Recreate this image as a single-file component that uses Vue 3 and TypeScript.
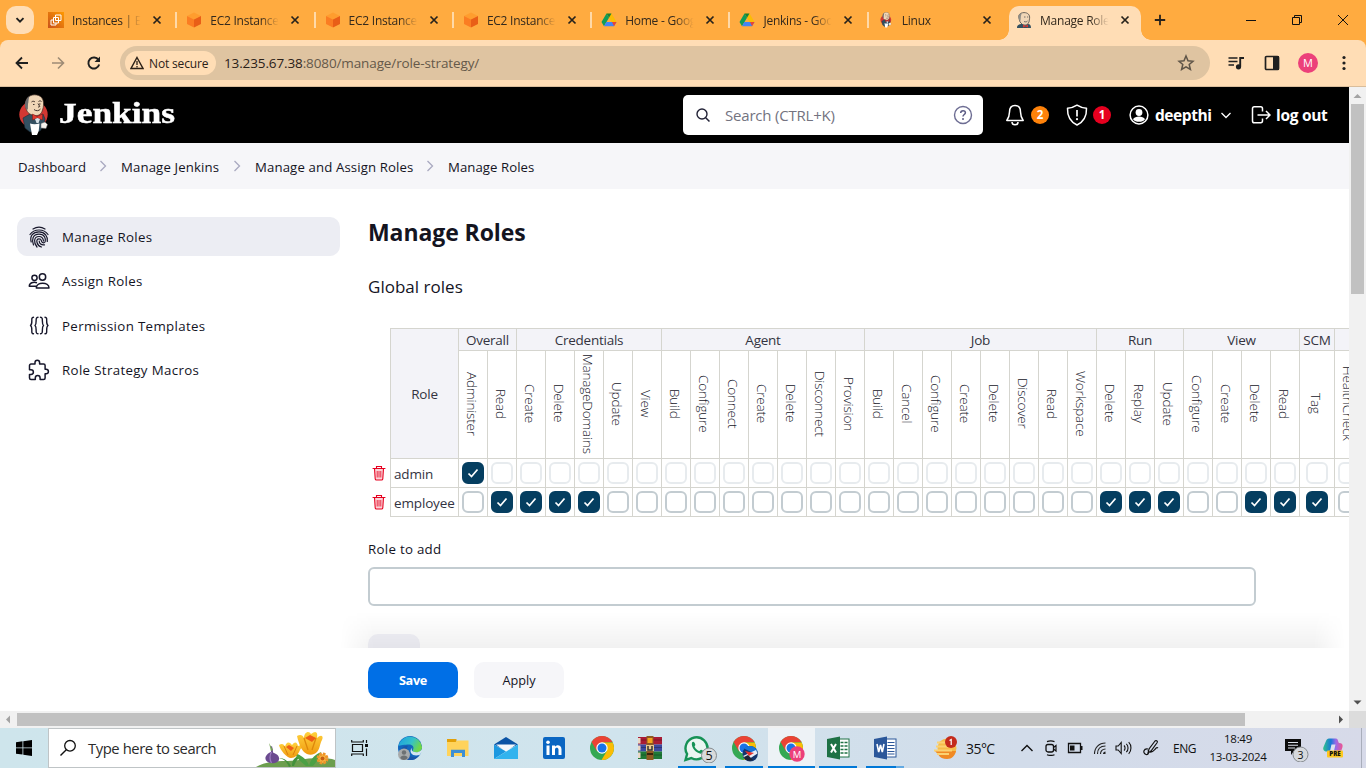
<script setup lang="ts">
interface Tab { title: string; icon: string; active?: boolean }
interface Group { name: string; perms: string[] }

const tabs: Tab[] = [
  { title: 'Instances | EC2', icon: 'i-instances' },
  { title: 'EC2 Instance C', icon: 'i-ec2' },
  { title: 'EC2 Instance C', icon: 'i-ec2' },
  { title: 'EC2 Instance C', icon: 'i-ec2' },
  { title: 'Home - Google', icon: 'i-drive' },
  { title: 'Jenkins - Goog', icon: 'i-drive' },
  { title: 'Linux', icon: 'i-butler' },
  { title: 'Manage Roles', icon: 'i-head', active: true },
]
const crumbs = ['Dashboard', 'Manage Jenkins', 'Manage and Assign Roles', 'Manage Roles']
const menu = [
  { label: 'Manage Roles', icon: 'i-finger', active: true },
  { label: 'Assign Roles', icon: 'i-people' },
  { label: 'Permission Templates', icon: 'i-braces' },
  { label: 'Role Strategy Macros', icon: 'i-puzzle' },
]
const groups: Group[] = [
  { name: 'Overall', perms: ['Administer', 'Read'] },
  { name: 'Credentials', perms: ['Create', 'Delete', 'ManageDomains', 'Update', 'View'] },
  { name: 'Agent', perms: ['Build', 'Configure', 'Connect', 'Create', 'Delete', 'Disconnect', 'Provision'] },
  { name: 'Job', perms: ['Build', 'Cancel', 'Configure', 'Create', 'Delete', 'Discover', 'Read', 'Workspace'] },
  { name: 'Run', perms: ['Delete', 'Replay', 'Update'] },
  { name: 'View', perms: ['Configure', 'Create', 'Delete', 'Read'] },
  { name: 'SCM', perms: ['Tag'] },
  { name: '', perms: ['HealthCheck'] },
]
const perms = groups.flatMap((g) => g.perms)
const roles = [
  { name: 'admin', on: [0], dim: true },
  { name: 'employee', on: [1, 2, 3, 4, 22, 23, 24, 27, 28, 29], dim: false },
]
const apps = [
  { icon: 'i-edge' }, { icon: 'i-folder' }, { icon: 'i-mail' }, { icon: 'i-linkedin' },
  { icon: 'i-chrome' }, { icon: 'i-rar' },
  { icon: 'i-whatsapp', open: true }, { icon: 'i-chrome-a', open: true },
  { icon: 'i-chrome-m', open: true, active: true }, { icon: 'i-excel', open: true },
  { icon: 'i-word', open: true, multi: true },
]
</script>

<template>
  <div class="screen">
    <svg class="defs" width="0" height="0">
      <defs>
        <linearGradient id="g-orange" x1="0" y1="1" x2="1" y2="0"><stop offset="0" stop-color="#c8511b" /><stop offset="1" stop-color="#f90" /></linearGradient>
        <linearGradient id="g-edge" x1="0" y1="0" x2="1" y2=".4"><stop offset="0" stop-color="#1b9de2" /><stop offset=".6" stop-color="#35c1c9" /><stop offset="1" stop-color="#6fd64a" /></linearGradient>
        <linearGradient id="g-pilot" x1="0" y1="0" x2="1" y2="0"><stop offset="0" stop-color="#2fc28a" /><stop offset=".4" stop-color="#1878d8" /><stop offset=".65" stop-color="#9b6be8" /><stop offset="1" stop-color="#f0558f" /></linearGradient>
        <linearGradient id="g-petal" x1="0" y1="0" x2="0" y2="1"><stop offset="0" stop-color="#ffd23d" /><stop offset="1" stop-color="#f09a10" /></linearGradient>
      </defs>
      <symbol id="i-instances" viewBox="0 0 16 16">
        <rect width="16" height="16" fill="url(#g-orange)" />
        <path d="M7.500 3h5.500v5.500H7.500zM5.500 5.500h5V11h-5zM5.500 8H3v5h5v-2" fill="none" stroke="#fff" stroke-width="1" stroke-linejoin="round" />
      </symbol>
      <symbol id="i-ec2" viewBox="0 0 16 16">
        <path d="M8 .5 15 4 8 7.500 1 4z" fill="#ff9d2e" /><path d="M1 4l7 3.500v8L1 12z" fill="#fb7d22" /><path d="M15 4 8 7.500v8L15 12z" fill="#e95e17" />
      </symbol>
      <symbol id="i-drive" viewBox="0 0 16 16">
        <path d="M5.500 1.500h5L15.500 10h-5z" fill="#fbbc04" /><path d="M5.500 1.500 8 5.800 3 14.300.5 10z" fill="#0f9d58" /><path d="M5.300 10h10.200L13 14.300H3z" fill="#4285f4" /><path d="M13 10h2.500L13 14.300 11 10z" fill="#ea4335" /><path d="M5.500 1.500h5L8 5.800z" fill="#188038" />
      </symbol>
      <symbol id="i-head" viewBox="0 0 16 16">
        <path d="M3 6C2 3 4 .7 8 .6c4 0 6 2.400 5.600 5.600L13 10l-2 3H7L4 10z" fill="#f0d6b7" stroke="#4b4a48" stroke-width=".8" />
        <path d="M3 8C1.600 4 3 1.500 6 1.200 4.500 3 5 5 4.500 8.500z" fill="#8f8d86" /><path d="M8 5h1.500m1.500 0h1.200M8 9.500c1.500.8 3 .3 3.500-.5" stroke="#555" fill="none" stroke-width=".8" />
        <path d="M1 16c0-3 2-4 5-4l3 1.500L12 12c2 0 3 1.500 3 4z" fill="#335061" /><path d="M7 12.500 9.500 14 12 12.500v3L9.500 14.500 7 15.500z" fill="#d33833" />
      </symbol>
      <symbol id="i-butler" viewBox="0 0 30 42">
        <ellipse cx="14.500" cy="20.500" rx="14.200" ry="13.500" fill="#d33833" />
        <path d="M4 24l7-4 7 3 6-3 2 5-1 6-4 6-10 1-5-4z" fill="#335061" stroke="#1d2c38" stroke-width=".6" />
        <path d="M7 14C5 6 9 1 15.500.8 22 .8 25 5 24.500 11c0 2-.5 3.500-1 5-1 4-4 6-7 5.500C11 21 8 19 7 14z" fill="#f0d6b7" stroke="#3d2c25" stroke-width=".7" />
        <path d="M7.500 15.500C4.500 12 6 5 10.500 2 9 6 9.800 8 9 10l-.2 5.500z" fill="#6d6b6d" />
        <path d="M12.500 8c1-1 2.500-1 3.500 0m3.500-.5c1-.8 2-.8 3 0M19 9.500l1.800 3-1.800.7M15 15.500c2 1.800 5 1.500 6.500-.5M14 10.500h1.500m4.500-.5h1.500" fill="none" stroke="#30241f" stroke-width=".9" />
        <path d="M13.500 20l4.500 2.500 5.500-2.500v6l-5-2-5 2z" fill="#e1392f" stroke="#7d1714" stroke-width=".5" /><path d="M16 25l2.500-1 2.500 1-1.500 4h-2z" fill="#d8e2e8" />
        <path d="M11 29.500c3 1 6 1 9.500 0l-.8 7.500-1.700 4h-5z" fill="#fff" /><path d="M22 29.500l4-1.500 2.500 2.500-1.500 4-5-.5z" fill="#f7f4ef" stroke="#6d6b6d" stroke-width=".5" />
      </symbol>
      <symbol id="i-finger" viewBox="0 0 22 22">
        <g fill="none" stroke="#17172b" stroke-width="1.200" stroke-linecap="round">
          <path d="M5 3C8.500.8 13.500.8 17 3" /><path d="M2 8.500C6 2.500 16 2.500 20 8.500" /><path d="M3.200 16C1.500 10 5 5.800 11 5.800S20 10.500 19.300 15.500" />
          <path d="M5.500 19C3.500 14 4.500 8.200 11 8.200c5.800 0 6.800 4.300 6.200 7.300-.3 1.800-2.700 1.800-3.400.3-.8-1.800-.3-3-2.800-3-2 0-2.500 1.700-2 3.700.6 2.300 2 3.800 4.500 4.500" /><path d="M9 21C5.500 17 5.500 10.500 11 10.500c3.500 0 4.200 2 4.500 4.500" /><path d="M11.200 15c0 2.500 2 4.300 5.300 3.800" />
        </g>
      </symbol>
      <symbol id="i-people" viewBox="0 0 22 22">
        <g fill="none" stroke="#17172b" stroke-width="1.500" stroke-linejoin="round"><circle cx="14.500" cy="7" r="3.200" /><circle cx="6.500" cy="7.800" r="2.600" /><path d="M8.300 18c0-6.300 12.700-6.300 12.700 0z" /><path d="M8 16.300H1.300c0-3.500 4-4.800 7.700-3.500" /></g>
      </symbol>
      <symbol id="i-braces" viewBox="0 0 22 22">
        <g fill="none" stroke="#17172b" stroke-width="1.400" stroke-linecap="round" stroke-linejoin="round"><path d="M5.500 3.200C2 3.200 5.500 9.500 2.500 11.500c3 2-.5 8.300 3 8.300M10 3.200C6.500 3.200 9.500 9.500 7 11.500c2.500 2-.5 8.300 3 8.300M12.500 3.200c3.500 0 .5 6.300 3 8.300-2.500 2 .5 8.300-3 8.300M17 3.200c3.500 0 0 6.300 3 8.300-3 2 .5 8.300-3 8.300" /></g>
      </symbol>
      <symbol id="i-puzzle" viewBox="0 0 22 22">
        <path d="M7 5V3.500a2.300 2.300 0 0 1 4.600 0V5h4a1.500 1.500 0 0 1 1.500 1.500v3.700h1a2.300 2.300 0 0 1 0 4.600h-1V19a1.500 1.500 0 0 1-1.500 1.500h-3.500V19a2.400 2.400 0 0 0-4.800 0v1.500H3A1.500 1.500 0 0 1 1.500 19v-3.500H3a2.400 2.400 0 0 0 0-4.800H1.500V6.500A1.500 1.500 0 0 1 3 5z" fill="none" stroke="#17172b" stroke-width="1.500" stroke-linejoin="round" />
      </symbol>
      <symbol id="i-trash" viewBox="0 0 14 16">
        <path d="M2.500 3.500l.7 10.300c.1.700.5 1.200 1.200 1.200h5.200c.7 0 1.100-.5 1.200-1.200l.7-10.300" fill="#fbd3d8" stroke="#e6001f" stroke-width="1.100" />
        <path d="M1 3.500h12M4.500 3V1.500h5V3" fill="none" stroke="#e6001f" stroke-width="1.100" stroke-linecap="round" /><path d="M5.200 6v6.500M7 6v6.500M8.800 6v6.500" fill="none" stroke="#e6001f" stroke-width=".8" />
      </symbol>
      <symbol id="i-chrome" viewBox="0 0 24 24">
        <circle cx="12" cy="12" r="12" fill="#34a853" /><path d="M1.600 6A12 12 0 0 1 22.400 6L12 6.600 6.800 15z" fill="#ea4335" /><path d="M12 6.600h10.700A12 12 0 0 1 11.500 24l5.400-9z" fill="#fbbc04" />
        <circle cx="12" cy="12" r="5.700" fill="#fff" /><circle cx="12" cy="12" r="4.500" fill="#1a73e8" />
      </symbol>
      <symbol id="i-chrome-a" viewBox="0 0 26 26">
        <use href="#i-chrome" width="24" height="24" /><circle cx="18.200" cy="17.700" r="7.700" fill="#14366f" /><path d="M12 12.500c4-4 11-3 13.500 3l-4 1.500z" fill="#1574db" /><path d="M11 20l13-6 1.500 3.500-10 6.500z" fill="#e8eef8" /><path d="M13 15l9 2-5 3z" fill="#e5322d" /><path d="M12 21l4-2 5 5c-4 2-8 0-9-3z" fill="#1d2536" />
      </symbol>
      <symbol id="i-chrome-m" viewBox="0 0 26 26">
        <use href="#i-chrome" width="24" height="24" /><circle cx="18" cy="18" r="7.700" fill="#ec407a" /><text x="18" y="21.500" font-size="9.500" fill="#fff" text-anchor="middle">M</text>
      </symbol>
      <symbol id="i-edge" viewBox="0 0 24 24">
        <circle cx="12" cy="12" r="12" fill="#1266bd" /><path d="M.4 10A12 12 0 0 1 24 11c0 4-3 5.500-6 5.500-2.500 0-4-1.200-3-2.700 1.500-2.800-.5-5.300-4-5.300-4.500 0-9 1-10.600 1.500z" fill="url(#g-edge)" />
        <path d="M14.500 11.500c-1.500 1.500-1 3.500 1 4.300 2.500 1 5.500.4 7.500-1.300l1-1.500v3l-2.500 3c-3.500 1-7 .5-8.500-2-1-2-.5-4 1.500-5.500z" fill="#d3e6f0" />
        <path d="M10 10c-2.500 3-1.500 8.500 3 10.500 3 1.300 6.500.5 8.500-1.500C18.500 24 12 25.500 7 23L4 12c2-2 4-2.500 6-2z" fill="#1a56a8" />
        <circle cx="6" cy="18.500" r="6" fill="#a7aaab" /><circle cx="6" cy="16.500" r="2.200" fill="#6d7173" /><path d="M2.300 22c0-3.500 7.400-3.500 7.400 0-2 2.500-5.500 2.500-7.400 0z" fill="#6d7173" />
      </symbol>
      <symbol id="i-folder" viewBox="0 0 24 24">
        <path d="M1 3h9.500v4H1z" fill="#e2a009" /><path d="M1 6h8.500l2-1.500H22.500V20H1z" fill="#ffd35b" /><path d="M5 21v-7.300h14V21h-3v-4H8v4z" fill="#3d8fd4" />
      </symbol>
      <symbol id="i-mail" viewBox="0 0 24 24">
        <path d="M0 8.500 12 1l12 7.500-12 6z" fill="#0a53a5" /><path d="M2 8.500h20L12 16z" fill="#f4f8fb" /><path d="M0 8.500l12 7L0 23z" fill="#1c98e0" /><path d="M24 8.500 0 23h24z" fill="#32b3ee" />
      </symbol>
      <symbol id="i-linkedin" viewBox="0 0 24 24">
        <rect x="1" y="1" width="22" height="22" rx="2" fill="#0a66c2" /><path d="M4.500 9.500h3v9.500h-3zM10 9.500h3v1.300c1.600-2.500 6.500-2 6.500 2.500V19h-3v-5.200c0-2.600-3.500-2.600-3.500 0V19h-3z" fill="#fff" /><circle cx="6" cy="6.300" r="1.800" fill="#fff" />
      </symbol>
      <symbol id="i-rar" viewBox="0 0 24 24">
        <rect x="0" y="1" width="24" height="7.500" fill="#a91c35" /><rect x="0" y="8.500" width="24" height="7" fill="#3d489f" /><rect x="0" y="15.500" width="24" height="7.500" fill="#1f7a37" />
        <path d="M0 2h2.500v5.500H0zM0 9.500h2.500v5H0zM0 16.500h2.500V22H0z" fill="#ead8c6" /><path d="M3 4h21M3 11.500h21M3 19h21" stroke="#00000040" />
        <path d="M8.500 0h7v24h-7z" fill="#8e5a22" /><path d="M9.500 2h5v5h-5z" fill="#f6a31e" /><path d="M8 9h8v6H8z" fill="#e9c98f" /><path d="M10 10v4h4v-4" fill="none" stroke="#333" stroke-width="1.500" /><path d="M9 18h6" stroke="#3a230b" stroke-width="2" />
      </symbol>
      <symbol id="i-whatsapp" viewBox="0 0 34 28">
        <path d="M2.500 25l1.600-6A11 11 0 1 1 8.300 23z" fill="#eaf5f1" stroke="#169256" stroke-width="2.400" /><path d="M9 7.500c1.500-1.500 2.500-.3 3.300 2 .4 1-1.200 1.500-.6 2.500 1 1.800 2.300 3 4.300 3.900 1 .4 1.400-1.400 2.200-1.100 2.600 1 3 1.500 1.800 3-3.500 3.500-12.700-4.500-11-10.300z" fill="#169256" />
        <circle cx="26" cy="20.500" r="7.500" fill="#d8dadb" stroke="#858b8f" /><text x="26" y="25" font-size="12.500" fill="#111" text-anchor="middle">5</text>
      </symbol>
      <symbol id="i-excel" viewBox="0 0 24 24">
        <rect x="12" y="3" width="10" height="18" fill="#fff" stroke="#217346" /><path d="M13.500 6.500h8M13.500 10h8M13.500 13.500h8M13.500 17h8" stroke="#217346" stroke-width="1.600" stroke-dasharray="3 1" /><path d="M0 3l13-2.500v23L0 21z" fill="#1e7145" /><path d="M4 8l5 8.500M9 8l-5 8.500" stroke="#fff" stroke-width="2" />
      </symbol>
      <symbol id="i-word" viewBox="0 0 24 24">
        <rect x="12" y="3" width="10" height="18" fill="#fff" stroke="#2b579a" /><path d="M13.500 6.500h7M13.500 9.500h7M13.500 12.500h7M13.500 15.500h7M13.500 18h7" stroke="#2b579a" stroke-width="1.200" /><path d="M0 3l13-2.500v23L0 21z" fill="#2b579a" /><path d="M3 8l1.700 8L6.500 9l1.800 7L10 8" fill="none" stroke="#fff" stroke-width="1.600" />
      </symbol>
    </svg>

    <header class="tabstrip">
      <button class="tabsearch"><svg width="10" height="10" viewBox="0 0 10 10"><path d="M1.500 3.200 5 6.700l3.500-3.500" fill="none" stroke="#1f1f1f" stroke-width="1.900" /></svg></button>
      <div class="tabs">
        <div v-for="(t, i) in tabs" :key="i" class="tab" :class="{ active: t.active, sep: i < 6 }">
          <svg class="fav" width="16" height="16"><use :href="'#' + t.icon" /></svg>
          <span class="title">{{ t.title }}</span>
          <svg class="x" width="10" height="10" viewBox="0 0 10 10"><path d="M1.500 1.500l7 7M8.500 1.500l-7 7" stroke="#27221b" stroke-width="1.700" /></svg>
        </div>
      </div>
      <svg class="plus" width="12" height="12" viewBox="0 0 12 12"><path d="M6 .8v10.400M.8 6h10.400" stroke="#27221b" stroke-width="1.800" /></svg>
      <div class="winctl">
        <svg width="12" height="12" viewBox="0 0 12 12"><path d="M1 6.500h10" stroke="#111" /></svg>
        <svg width="12" height="12" viewBox="0 0 12 12"><path d="M1.500 3.500h7v7h-7zM3.500 3.500v-2h7v7h-2" fill="none" stroke="#111" /></svg>
        <svg width="12" height="12" viewBox="0 0 12 12"><path d="M1 1l10 10M11 1 1 11" stroke="#111" /></svg>
      </div>
    </header>

    <div class="toolwrap">
      <div class="toolbar">
        <svg class="nav" width="16" height="16" viewBox="0 0 16 16"><path d="M14 8H3M8 2.500 2.500 8 8 13.500" fill="none" stroke="#1f1f1f" stroke-width="1.800" /></svg>
        <svg class="nav" width="16" height="16" viewBox="0 0 16 16"><path d="M2 8h11M8 2.500 13.500 8 8 13.500" fill="none" stroke="#9e8b75" stroke-width="1.600" /></svg>
        <svg class="nav" width="16" height="16" viewBox="0 0 16 16"><path d="M13.200 9.500A5.500 5.500 0 1 1 12.500 5" fill="none" stroke="#1f1f1f" stroke-width="1.900" /><path d="M14 1.500V7H8.500z" fill="#1f1f1f" /></svg>
        <div class="omni">
          <div class="chip"><svg width="14" height="14" viewBox="0 0 14 14"><path d="M7 1.500 13 12.500H1z" fill="none" stroke="#2b2118" stroke-width="1.400" /><path d="M7 5v4M7 10v1.400" stroke="#2b2118" stroke-width="1.300" /></svg><span>Not secure</span></div>
          <span class="url"><b>13.235.67.38</b>:8080/manage/role-strategy/</span>
          <svg class="star" width="18" height="18" viewBox="0 0 18 18"><path d="M9 2l2 4.700 5 .5-3.800 3.300 1.200 5L9 12.800 4.600 15.500l1.200-5L2 7.200l5-.5z" fill="none" stroke="#5f5548" stroke-width="1.500" /></svg>
        </div>
        <svg class="act" width="18" height="18" viewBox="0 0 18 18"><path d="M1.500 4h9M1.500 7.500h9M1.500 11h5.500" stroke="#1f1f1f" stroke-width="1.700" /><path d="M13.200 12.500V4H17" fill="none" stroke="#1f1f1f" stroke-width="1.900" /><circle cx="11.500" cy="12.800" r="2.600" fill="#1f1f1f" /></svg>
        <svg class="act" width="18" height="18" viewBox="0 0 18 18"><rect x="2.500" y="2.500" width="13" height="13" rx="1" fill="none" stroke="#1f1f1f" stroke-width="1.700" /><path d="M10 2h6v14h-6z" fill="#1f1f1f" /></svg>
        <span class="avatar">M</span>
        <svg class="act" width="18" height="18" viewBox="0 0 18 18"><g fill="#1f1f1f"><circle cx="9" cy="3.500" r="1.600" /><circle cx="9" cy="9" r="1.600" /><circle cx="9" cy="14.500" r="1.600" /></g></svg>
      </div>
    </div>

    <div class="viewport">
      <main class="page">
        <div class="jhead">
          <svg class="jlogo" width="30" height="42"><use href="#i-butler" /></svg>
          <span class="jname">Jenkins</span>
          <div class="jsearch">
            <svg width="16" height="16" viewBox="0 0 16 16"><circle cx="7" cy="7" r="5" fill="none" stroke="#222236" stroke-width="1.400" /><path d="M10.700 10.700l3.800 3.800" stroke="#222236" stroke-width="1.500" /></svg>
            <span class="ph">Search (CTRL+K)</span>
            <svg width="20" height="20" viewBox="0 0 20 20"><circle cx="10" cy="10" r="8.500" fill="none" stroke="#6d6d93" stroke-width="1.400" /><path d="M7.700 8c0-3 4.700-3 4.700-.3 0 1.800-2.400 1.900-2.400 3.800" fill="none" stroke="#5c5c85" stroke-width="1.500" /><circle cx="10" cy="14" r="1" fill="#5c5c85" /></svg>
          </div>
          <svg class="bell" width="20" height="22" viewBox="0 0 20 22"><path d="M10 1.500c-4 0-5.500 3-5.500 6.500 0 4-1 6-2.700 8.500h16.400c-1.700-2.500-2.700-4.500-2.700-8.500 0-3.500-1.500-6.500-5.500-6.500zM7 18c0 3.800 6 3.800 6 0" fill="none" stroke="#fff" stroke-width="1.500" stroke-linejoin="round" /></svg>
          <span class="badge or">2</span>
          <svg class="shield" width="22" height="22" viewBox="0 0 22 22"><path d="M11 1.200C8 3.200 5 4 1.500 4.200 1.200 12 4 17.500 11 21c7-3.500 9.800-9 9.500-16.800C17 4 14 3.200 11 1.200z" fill="none" stroke="#fff" stroke-width="1.500" stroke-linejoin="round" /><path d="M11 6v6.500" stroke="#fff" stroke-width="1.700" /><circle cx="11" cy="15.200" r="1.100" fill="#fff" /></svg>
          <span class="badge rd">1</span>
          <svg class="user" width="20" height="20" viewBox="0 0 20 20"><circle cx="10" cy="10" r="8.900" fill="none" stroke="#fff" stroke-width="1.500" /><circle cx="10" cy="7.500" r="3.400" fill="#fff" /><path d="M4 14.200c2-3.600 10-3.600 12 0-2.500 3.500-9.500 3.500-12 0z" fill="#fff" /></svg>
          <b class="hlink name">deepthi</b>
          <svg class="chev" width="12" height="12" viewBox="0 0 12 12"><path d="M1.500 4 6 8.500 10.500 4" fill="none" stroke="#fff" stroke-width="1.300" /></svg>
          <svg class="exit" width="20" height="20" viewBox="0 0 20 20"><path d="M11.500 6.500V3.800C11.500 2.500 11 1.800 9.700 1.800H3.300C2.500 1.800 1.500 2.300 1.500 3.600v12.400c0 1.300 1 1.800 1.800 1.800h6.400c1.300 0 1.800-.7 1.800-2V13.500M6.500 10H19M15 6l4 4-4 4" fill="none" stroke="#fff" stroke-width="1.500" /></svg>
          <b class="hlink out">log out</b>
        </div>

        <nav class="crumbs">
          <template v-for="(c, i) in crumbs" :key="c">
            <svg v-if="i" class="sepi" width="8" height="12" viewBox="0 0 8 12"><path d="M1.500 1l5 5-5 5" fill="none" stroke="#a9a9c0" stroke-width="1.300" /></svg>
            <span :class="'c' + i">{{ c }}</span>
          </template>
        </nav>

        <div class="body">
          <aside class="side">
            <a v-for="m in menu" :key="m.label" class="item" :class="{ active: m.active }">
              <svg width="22" height="22"><use :href="'#' + m.icon" /></svg><span>{{ m.label }}</span>
            </a>
          </aside>
          <section class="content">
            <h1>Manage Roles</h1>
            <h2>Global roles</h2>
            <div class="grid">
              <div class="gutter tall"></div>
              <div class="cell head role">Role</div>
              <div v-for="(g, i) in groups" :key="'g' + i" class="cell head" :class="'span' + g.perms.length">{{ g.name }}</div>
              <div v-for="(p, i) in perms" :key="'p' + i" class="cell perm"><span>{{ p }}</span></div>
              <template v-for="r in roles" :key="r.name">
                <div class="gutter"><svg width="14" height="16"><use href="#i-trash" /></svg></div>
                <div class="cell rname">{{ r.name }}</div>
                <div v-for="(p, i) in perms" :key="r.name + i" class="cell">
                  <span class="box" :class="{ on: r.on.includes(i), dim: r.dim }">
                    <svg v-if="r.on.includes(i)" width="12" height="12" viewBox="0 0 12 12"><path d="M1.500 6.500 4.500 9.500 10.500 2.500" fill="none" stroke="#fff" stroke-width="1.700" /></svg>
                  </span>
                </div>
              </template>
            </div>
            <label class="lbl">Role to add</label>
            <div class="input"></div>
            <div class="ghost"></div>
          </section>
        </div>

        <div class="bottom">
          <div class="shade"></div>
          <button class="btn save">Save</button>
          <button class="btn apply">Apply</button>
        </div>
      </main>
      <div class="vbar">
        <svg width="17" height="17" viewBox="0 0 17 17"><path d="M4.500 11 8.500 7l4 4z" fill="#a3a3a3" /></svg>
        <i></i>
        <svg class="dn" width="17" height="17" viewBox="0 0 17 17"><path d="M4.500 6.500l4 4 4-4z" fill="#505050" /></svg>
      </div>
      <div class="hbar">
        <svg width="17" height="17" viewBox="0 0 17 17"><path d="M10 4.500 6 8.500l4 4z" fill="#a3a3a3" /></svg>
        <i></i>
        <svg class="rt" width="17" height="17" viewBox="0 0 17 17"><path d="M7 4.500l4 4-4 4z" fill="#505050" /></svg>
      </div>
      <div class="corner"></div>
    </div>

    <footer class="taskbar">
      <div class="start"><svg width="16" height="16" viewBox="0 0 16 16"><path d="M0 2.200 6.500 1.300v6.200H0zM7.300 1.200 16 0v7.500H7.300zM0 8.300h6.500v6.300L0 13.700zM7.300 8.300H16V16l-8.700-1.200z" fill="#000" /></svg></div>
      <div class="tsearch">
        <svg width="18" height="18" viewBox="0 0 18 18"><circle cx="11" cy="6.800" r="5.300" fill="none" stroke="#111" stroke-width="1.300" /><path d="M7.300 10.700 1.500 16.500" stroke="#111" stroke-width="1.400" /></svg>
        <span>Type here to search</span>
        <svg class="flowers" width="80" height="38" viewBox="0 0 80 38">
          <path d="M1 38C14 30 34 33 44 31s28-3 36 0v7z" fill="#6c9e4e" />
          <path d="M36 37c-3-6-8-8-12-8 5 1 8 4 10 9zM37 37c0-6 3-9 8-11-2 5-5 7-6 11z" fill="#43913c" /><path d="M54 37c-1-6-8-11-14-13 2 7 7 9 11 13zM54 37c2-8 6-11 12-14-1 7-5 10-8 14z" fill="#4ba045" />
          <path d="M17 17c-1.500 0-1 3-1 6-5 2-7 6-4.500 9 3 3 9 3 12 0 2-4-1-7-5.500-8.500 0-3-.5-4-1-6.500z" fill="#6b4a90" /><path d="M16.500 23c-2 3-2 8 0 11" stroke="#9b7bc0" stroke-width="1.300" fill="none" /><path d="M14 14l2 8 2-1z" fill="#75a451" />
          <path d="M24 16c3-2 5-1 6 2 1-5 4-6 7-2 3-4 5-3 6 1 4-2 5 0 2 4-2 5-5 8-9 8s-11-8-12-13z" fill="url(#g-petal)" /><path d="M29 17l4 9M42 17l-4 9" stroke="#da7f0c" fill="none" /><path d="M31 18l3-2 5 3-3 3z" fill="#ee5e16" />
          <path d="M42 7c3-2 6-1 7 2 0-6 5-8 7-4 5-4 7-2 6 4 4-4 7-2 5 2-2 3-2 9-5 12-4 4-10 3-13 0-4-4-6-12-7-16z" fill="url(#g-petal)" /><path d="M49 9l4 12M61 9l-4 12" stroke="#dd880b" fill="none" stroke-width="1.300" /><path d="M50 9l5-3 6 3-4 4z" fill="#ee5e16" />
          <circle cx="67.500" cy="29.500" r="4.500" fill="#f9b642" stroke="#ee9429" stroke-width="3" stroke-dasharray="2.500 1" /><circle cx="67.500" cy="29.500" r="2" fill="#c65e14" />
        </svg>
      </div>
      <div class="view"><svg width="18" height="16" viewBox="0 0 18 16"><path d="M1.500 4.500h10v7h-10zM.7 0v2h11.600V0M.7 16v-2h11.600v2M15.500 0v3M15.500 8.500V16" fill="none" stroke="#111" stroke-width="1.200" /><path d="M14 4h3v3h-3z" fill="#111" /></svg></div>
      <div class="apps">
        <div v-for="a in apps" :key="a.icon" class="app" :class="{ open: a.open, active: a.active, multi: a.multi }">
          <svg class="ai" :class="a.icon"><use :href="'#' + a.icon" /></svg>
        </div>
      </div>
      <div class="tray">
        <svg width="24" height="24" viewBox="0 0 24 24"><circle cx="13" cy="12" r="9.500" fill="#f6bd4a" /><path d="M1 15h21c-1 4.500-4 8-9 8-4 0-7-1.500-8.500-4z" fill="#f08a24" /><path d="M3 6.500h11M2 10.500h12M0 14.500h18M3 18h12" stroke="#fbd272" stroke-width="1.800" /><circle cx="17" cy="6" r="6" fill="#c42b1c" /><path d="M15.500 4.500l1.700-1V9" stroke="#fff" stroke-width="1.200" fill="none" /></svg>
        <span class="temp">35°C</span>
        <svg width="14" height="14" viewBox="0 0 14 14"><path d="M1.500 10 7 4.500 12.500 10" fill="none" stroke="#111" stroke-width="1.400" /></svg>
        <svg width="14" height="16" viewBox="0 0 14 16"><rect x="2" y="4.500" width="7.500" height="7.500" rx="2" fill="none" stroke="#111" stroke-width="1.300" /><path d="M9.500 7.500l2.500-2v5.500l-2.500-2M3 1.600C5.500.6 8 .6 10.500 1.600M3 14.700c2.500 1 5 1 7.500 0" fill="none" stroke="#111" stroke-width="1.200" /></svg>
        <svg width="16" height="14" viewBox="0 0 16 14"><path d="M1.500 2.500h12v9h-12z" fill="none" stroke="#111" stroke-width="1.300" /><path d="M3 4.500h4.500v5H3zM14 5h1.500v4H14z" fill="#111" /></svg>
        <svg width="14" height="14" viewBox="0 0 14 14"><g fill="none" stroke="#222" stroke-width="1.100"><path d="M1.500 13C1.500 6.500 6 2 12.500 2M4.500 13c0-5 3-8 8-8M7.500 13c0-3 2-5 5-5" /></g><path d="M10 13c0-1.500 1-2.500 2.500-2.500V13z" fill="#222" /></svg>
        <svg width="18" height="14" viewBox="0 0 18 14"><path d="M1 5h2.200l3-3.500v11L3.200 9H1zM9 4.500c1.400 1.200 1.400 3.800 0 5M11.300 2.800c2.300 2 2.300 6.400 0 8.400M13.700 1.200c3 3 3 8.600 0 11.600" fill="none" stroke="#111" stroke-width="1.100" /></svg>
        <svg width="18" height="18" viewBox="0 0 18 18"><path d="M6 10C2 9 0 14 4 15.500c3 .5 3-3 2-4.500M6 14l1-4 6-8c1-1.200 3 .3 2.200 1.500L9 12zM8 13c4 1 6-6 8-4" fill="none" stroke="#111" stroke-width="1.200" /></svg>
        <span class="eng">ENG</span>
        <span class="clock"><span>18:49</span><span>13-03-2024</span></span>
        <svg width="28" height="28" viewBox="0 0 28 28"><path d="M4 5h16v12H13l-3 4v-4H4z" fill="#0c0c0c" /><path d="M7 8.500h10M7 11.200h10M7 14h7" stroke="#dbe0ea" stroke-width="1.100" /><circle cx="19.500" cy="20.500" r="7.500" fill="#d6d9dd" stroke="#868b90" /><text x="19.500" y="24.500" font-size="10.500" fill="#111" text-anchor="middle">3</text></svg>
        <svg width="22" height="22" viewBox="0 0 22 22"><path d="M7 1.500h7c2 0 2 3 3 4.500 3 0 4 1.500 3.500 4l-2 6c-.6 2-2 3.500-5 3.500H8c-2.500 0-2-4-3-5-3 0-4.500-2-3.500-4.500L4 4c.5-1.500 1.500-2.500 3-2.500z" fill="url(#g-pilot)" /><path d="M9.500 7.500h4L12 14H8z" fill="#dfe1ef" /><rect x="5" y="13.500" width="16" height="7" rx="1" fill="#ffc81e" /><text x="13" y="19.300" font-size="6.200" font-weight="800" fill="#111" text-anchor="middle">PRE</text></svg>
        <i class="peek"></i>
      </div>
    </footer>
  </div>
</template>

<style>
body { margin: 0; overflow: hidden; }
</style>

<style scoped>
* { box-sizing: border-box; }
.screen { width: 1366px; height: 768px; overflow: hidden; display: flex; flex-direction: column; font-family: "Open Sans", "Noto Sans", sans-serif; color: #14141f; background: #fff; white-space: nowrap; }
.defs { position: absolute; }
svg { flex: none; display: block; }
button { border: 0; padding: 0; font-family: inherit; }

.tabstrip { height: 40px; flex: none; background: #ffab40; display: flex; align-items: center; }
.tabsearch { width: 28px; height: 28px; margin-left: 6px; border-radius: 10px; background: #ffddb5; display: grid; place-items: center; }
.tabs { display: flex; margin-left: 4px; height: 40px; }
.tab { width: 138.300px; height: 40px; padding-left: 10px; display: flex; align-items: center; position: relative; }
.title { width: 70px; margin-left: 8px; overflow: hidden; font-size: 12px; letter-spacing: -.25px; color: #33291d; -webkit-mask-image: linear-gradient(90deg, #000 72%, transparent 98%); }
.x { margin-left: 10px; }
.tab.sep::after { content: ""; position: absolute; right: -1px; top: 12px; width: 2px; height: 16px; background: #ffd9a8; }
.tab.active::before { content: ""; position: absolute; left: 3px; top: 6px; width: 132px; height: 34px; border-radius: 10px 10px 0 0; background: #ffddb5; }
.tab.active::after { content: ""; position: absolute; left: -7px; bottom: 0; width: 152px; height: 10px; background: radial-gradient(circle at 0 0, transparent 9.500px, #ffddb5 10px) left / 10px 10px no-repeat, radial-gradient(circle at 100% 0, transparent 9.500px, #ffddb5 10px) right / 10px 10px no-repeat; }
.tab.active > * { position: relative; z-index: 1; }
.plus { margin-left: 10px; }
.winctl { margin-left: auto; display: flex; gap: 34px; padding-right: 17px; }

.toolwrap { height: 47px; flex: none; background: #ffab40; }
.toolbar { height: 47px; background: #ffddb5; border-bottom: 1px solid #d9bd9b; border-radius: 8px 8px 0 0; display: flex; align-items: center; padding-left: 14px; }
.nav { margin-right: 20px; }
.omni { width: 1090px; height: 34px; margin-left: -2px; border-radius: 17px; background: #dfc4a1; display: flex; align-items: center; padding-left: 5px; }
.chip { width: 91px; height: 24px; border-radius: 12px; background: #ffddb5; display: flex; align-items: center; padding-left: 5px; gap: 5px; font-size: 12px; letter-spacing: -.15px; color: #2b2118; font-weight: 500; }
.url { margin-left: 8px; font-size: 13.500px; letter-spacing: -.12px; color: #65594a; }
.url b { font-weight: 400; color: #2b2118; }
.star { margin-left: auto; margin-right: 15px; }
.act { margin-left: 17px; }
.act + .act { margin-left: 18px; }
.avatar { width: 20px; height: 20px; margin-left: 17px; border-radius: 50%; background: #ec407a; color: #fff; font-size: 11px; line-height: 20px; text-align: center; }

.viewport { height: 641px; flex: none; display: grid; grid-template: 624px 17px / 1349px 17px; }
.page { overflow: hidden; position: relative; background: #fff; }
.jhead { height: 56px; background: #000; display: flex; align-items: center; padding-left: 19px; color: #fff; }
.jname { width: 116px; margin-left: 10px; margin-top: -4px; font: 700 30px/1 "Liberation Serif", serif; -webkit-text-stroke: .5px #fff; transform: scaleX(1.18); transform-origin: 0 50%; }
.jsearch { width: 300px; height: 40px; margin-left: 508px; border-radius: 5px; background: #fff; display: flex; align-items: center; padding: 0 10px 0 12px; }
.ph { margin-left: 14px; margin-right: auto; font-size: 15px; letter-spacing: -.2px; color: #73737f; }
.bell { margin-left: 22px; }
.badge { width: 18px; height: 18px; border-radius: 50%; font-size: 11.500px; font-weight: 700; line-height: 18px; text-align: center; }
.or { background: #fe820a; margin-left: 6px; }
.rd { background: #e6001f; margin-left: 5px; }
.shield { margin-left: 17px; }
.user { margin-left: 18px; }
.hlink { font-size: 15.500px; letter-spacing: -.3px; font-weight: 700; }
.name { margin-left: 6px; width: 57px; letter-spacing: -.45px; }
.chev { margin-left: 8px; }
.exit { margin-left: 19px; margin-right: 5px; }

.crumbs { height: 46px; background: #f6f6f9; display: flex; align-items: center; padding: 2px 0 0 18px; font-size: 13.200px; font-weight: 500; letter-spacing: .13px; }
.crumbs .c0 { width: 68px; letter-spacing: 0; }
.crumbs .c1 { width: 99px; }
.crumbs .c2 { width: 158px; }
.crumbs .c3 { letter-spacing: .06px; }
.sepi { margin: -3px 14px 0 13px; }

.body { display: flex; padding: 28px 0 0 17px; }
.side { width: 323px; display: flex; flex-direction: column; gap: 5.400px; }
.item { height: 39px; border-radius: 10px; display: flex; align-items: center; padding-left: 11px; gap: 12px; font-size: 13.300px; letter-spacing: .34px; font-weight: 500; color: #14141f; }
.item span { padding-top: 1px; }
.item.active { background: #ecedf3; }
.content { width: 981px; margin-left: 28px; overflow: hidden; }
h1 { margin: -1px 0 0; height: 32px; font-size: 23px; line-height: 32px; letter-spacing: -.08px; font-weight: 700; }
h2 { margin: 26px 0 0; height: 26px; font-size: 17px; line-height: 25px; letter-spacing: .02px; font-weight: 500; }
.grid { width: 1013px; margin-top: 28px; display: grid; grid-template-columns: 22px 68px repeat(29, 29px) 35px 29px; grid-template-rows: 22px 108px 29px 30px; font-size: 13.500px; letter-spacing: -.25px; color: #33333f; }
.cell { border: solid #d5d5cf; border-width: 1px 0 0 1px; display: flex; align-items: center; justify-content: center; }
.rname { justify-content: flex-start; padding: 2px 0 0 3px; letter-spacing: -.15px; }
.rname ~ .rname, .rname ~ .rname ~ .cell { border-bottom: 1px solid #d5d5cf; }
.head { background: #f3f3f8; padding-top: 1px; }
.role { grid-row: span 2; }
.tall { grid-row: span 2; }
.span2 { grid-column: span 2; } .span3 { grid-column: span 3; } .span4 { grid-column: span 4; } .span5 { grid-column: span 5; } .span7 { grid-column: span 7; } .span8 { grid-column: span 8; }
.perm { padding: 0 2px 2px 0; color: #14141f; }
.perm span { writing-mode: vertical-rl; line-height: 20px; font-size: 13.500px; font-weight: 300; letter-spacing: -.18px; }
.gutter { display: flex; align-items: center; padding-left: 4px; }
.box { width: 22px; height: 22px; flex: none; border: 2px solid #c3ccd1; border-radius: 6px; display: grid; place-items: center; }
.box.dim { border-color: #e7ebee; }
.box.on { background: #053e60; border-color: #053e60; }
.lbl { display: block; height: 20px; margin-top: 22px; font-size: 13.300px; line-height: 20px; letter-spacing: .28px; font-weight: 500; }
.input { width: 888px; height: 39px; margin-top: 8px; border: 2px solid #c3ccd1; border-radius: 6px; }
.ghost { width: 52px; height: 36px; margin-top: 28px; border-radius: 10px; background: #f2f2f8; }

.bottom { position: absolute; left: 340px; right: 0; bottom: 0; height: 63px; background: #fff; display: flex; align-items: flex-start; gap: 16px; padding: 14px 0 0 28px; }
.shade { position: absolute; left: 0; right: 0; top: -36px; height: 36px; background: linear-gradient(transparent, rgba(0, 0, 0, .055)); -webkit-mask-image: linear-gradient(90deg, transparent, #000 34px, #000 974px, transparent 1005px); }
.btn { width: 90px; height: 36px; padding-top: 1px; border-radius: 10px; font-size: 12.700px; line-height: 35px; text-align: center; }
.save { background: #006fe6; color: #fff; font-weight: 700; letter-spacing: -.3px; }
.apply { background: #f6f6f9; color: #14141f; font-weight: 500; }

.vbar { background: #f1f1f1; display: flex; flex-direction: column; }
.vbar i { width: 13px; height: 190px; margin-left: 2px; background: #c1c1c1; }
.dn { margin-top: auto; }
.hbar { background: #f1f1f1; display: flex; align-items: center; }
.hbar i { width: 1228px; height: 13px; background: #c1c1c1; }
.rt { margin-left: auto; }
.corner { background: #dcdcdc; }

.taskbar { height: 40px; flex: none; display: flex; background: linear-gradient(90deg, #cee5ec, #d0e4ed 45%, #d2dcea 75%, #d7dae9); }
.start, .view { width: 48px; display: grid; place-items: center; }
.tsearch { width: 288px; background: #fff; border: 1px solid #bfc4c6; display: flex; align-items: center; padding-left: 10px; position: relative; overflow: hidden; }
.tsearch span { margin-left: 11px; font-size: 14.800px; letter-spacing: -.42px; color: #2b2b2b; }
.flowers { position: absolute; right: 0; bottom: 0; }
.apps { display: flex; margin-left: 2px; width: 523px; }
.app { width: 48px; flex: none; display: grid; place-items: center; position: relative; }
.app.open { width: 47px; }
.app.open::after { content: ""; position: absolute; left: 4px; right: 5px; bottom: 0; height: 2px; background: #0078d7; }
.app.active { background: #edf2f6; }
.app.active::after { left: 0; right: 0; }
.app.multi::after { background: linear-gradient(90deg, #0078d7 79%, #62a9e2 79%); }
.ai { width: 24px; height: 24px; }
.ai.i-chrome-a, .ai.i-chrome-m { width: 26px; height: 26px; margin-top: 2px; }
.ai.i-whatsapp { width: 34px; height: 28px; margin: 2px 0 0 5px; }
.tray { flex: 1; display: grid; grid-template-columns: 24px 57px 24px 24px 24px 25px 24px 29px 39px 68px 46px 30px 1fr; margin-left: 25px; place-items: center; color: #111; }
.temp { justify-self: start; margin-left: 8px; font-size: 14px; letter-spacing: -.55px; }
.eng { font-size: 12px; letter-spacing: -.4px; }
.clock { display: flex; flex-direction: column; align-items: center; font-size: 11.500px; line-height: 18px; letter-spacing: -.3px; }
.peek { width: 1px; height: 40px; background: #a9aebb; justify-self: end; margin-right: 4px; }
</style>
